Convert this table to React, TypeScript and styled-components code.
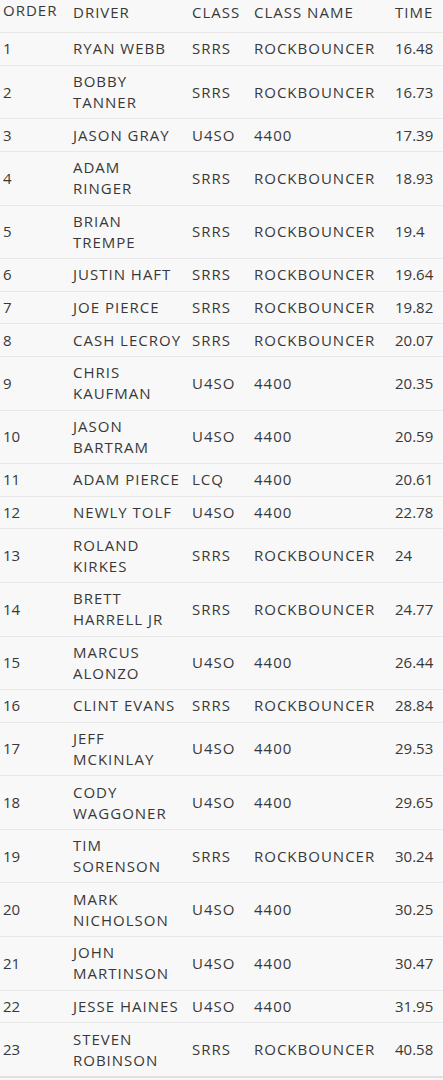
import React from 'react';
import styled, { createGlobalStyle } from 'styled-components';

const GlobalStyle = createGlobalStyle`
  html, body {
    margin: 0;
    padding: 0;
    background: #f8f8f8;
  }
`;

const StyledResults = styled('div')`
  width: 443px;
  height: 1080px;
  overflow: hidden;
  background: #f8f8f8;
  font-family: 'Open Sans', 'Liberation Sans', sans-serif;
  color: #383838;
`;

const Table = styled('table')`
  width: 443px;
  table-layout: fixed;
  border-collapse: collapse;
  border-bottom: 2px solid #e0e0e0;
`;

const Col = styled('col')<{ $w: number }>`
  width: ${(p) => p.$w}px;
`;

const HeadCell = styled('th')<{ $lift?: boolean }>`
  text-align: left;
  font-weight: 500;
  font-size: 15px;
  letter-spacing: 1px;
  line-height: 20px;
  height: 32.7px;
  box-sizing: border-box;
  padding: ${(p) => (p.$lift ? '0 3px' : '2px 3px 0')};
  vertical-align: top;
  white-space: nowrap;
  border-bottom: 1px solid #e8e8e8;
`;

const Row = styled('tr')`
  border-bottom: 1px solid #e8e8e8;
`;

const Cell = styled('td')<{ $num?: boolean }>`
  font-size: 15px;
  font-weight: 500;
  letter-spacing: ${(p) => (p.$num ? '0' : '1px')};
  line-height: 21px;
  padding: 5.3px 3px;
  vertical-align: middle;
  white-space: nowrap;
`;

const NameLine = styled('span')`
  display: block;
`;

type Result = {
  order: number;
  driver: string[];
  cls: string;
  className: string;
  time: string;
};

const results: Result[] = [
  { order: 1, driver: ['RYAN WEBB'], cls: 'SRRS', className: 'ROCKBOUNCER', time: '16.48' },
  { order: 2, driver: ['BOBBY', 'TANNER'], cls: 'SRRS', className: 'ROCKBOUNCER', time: '16.73' },
  { order: 3, driver: ['JASON GRAY'], cls: 'U4SO', className: '4400', time: '17.39' },
  { order: 4, driver: ['ADAM', 'RINGER'], cls: 'SRRS', className: 'ROCKBOUNCER', time: '18.93' },
  { order: 5, driver: ['BRIAN', 'TREMPE'], cls: 'SRRS', className: 'ROCKBOUNCER', time: '19.4' },
  { order: 6, driver: ['JUSTIN HAFT'], cls: 'SRRS', className: 'ROCKBOUNCER', time: '19.64' },
  { order: 7, driver: ['JOE PIERCE'], cls: 'SRRS', className: 'ROCKBOUNCER', time: '19.82' },
  { order: 8, driver: ['CASH LECROY'], cls: 'SRRS', className: 'ROCKBOUNCER', time: '20.07' },
  { order: 9, driver: ['CHRIS', 'KAUFMAN'], cls: 'U4SO', className: '4400', time: '20.35' },
  { order: 10, driver: ['JASON', 'BARTRAM'], cls: 'U4SO', className: '4400', time: '20.59' },
  { order: 11, driver: ['ADAM PIERCE'], cls: 'LCQ', className: '4400', time: '20.61' },
  { order: 12, driver: ['NEWLY TOLF'], cls: 'U4SO', className: '4400', time: '22.78' },
  { order: 13, driver: ['ROLAND', 'KIRKES'], cls: 'SRRS', className: 'ROCKBOUNCER', time: '24' },
  { order: 14, driver: ['BRETT', 'HARRELL JR'], cls: 'SRRS', className: 'ROCKBOUNCER', time: '24.77' },
  { order: 15, driver: ['MARCUS', 'ALONZO'], cls: 'U4SO', className: '4400', time: '26.44' },
  { order: 16, driver: ['CLINT EVANS'], cls: 'SRRS', className: 'ROCKBOUNCER', time: '28.84' },
  { order: 17, driver: ['JEFF', 'MCKINLAY'], cls: 'U4SO', className: '4400', time: '29.53' },
  { order: 18, driver: ['CODY', 'WAGGONER'], cls: 'U4SO', className: '4400', time: '29.65' },
  { order: 19, driver: ['TIM', 'SORENSON'], cls: 'SRRS', className: 'ROCKBOUNCER', time: '30.24' },
  { order: 20, driver: ['MARK', 'NICHOLSON'], cls: 'U4SO', className: '4400', time: '30.25' },
  { order: 21, driver: ['JOHN', 'MARTINSON'], cls: 'U4SO', className: '4400', time: '30.47' },
  { order: 22, driver: ['JESSE HAINES'], cls: 'U4SO', className: '4400', time: '31.95' },
  { order: 23, driver: ['STEVEN', 'ROBINSON'], cls: 'SRRS', className: 'ROCKBOUNCER', time: '40.58' },
];

const App: React.FC = () => {
  return (
    <StyledResults>
      <GlobalStyle />
      <Table>
        <colgroup>
          <Col $w={70} />
          <Col $w={119} />
          <Col $w={62} />
          <Col $w={141} />
          <Col $w={51} />
        </colgroup>
        <thead>
          <tr>
            <HeadCell $lift>ORDER</HeadCell>
            <HeadCell>DRIVER</HeadCell>
            <HeadCell>CLASS</HeadCell>
            <HeadCell>CLASS NAME</HeadCell>
            <HeadCell>TIME</HeadCell>
          </tr>
        </thead>
        <tbody>
          {results.map((r) => (
            <Row key={r.order}>
              <Cell $num>{r.order}</Cell>
              <Cell>
                {r.driver.map((line) => (
                  <NameLine key={line}>{line}</NameLine>
                ))}
              </Cell>
              <Cell>{r.cls}</Cell>
              <Cell>{r.className}</Cell>
              <Cell $num>{r.time}</Cell>
            </Row>
          ))}
        </tbody>
      </Table>
    </StyledResults>
  );
};

export default App;
